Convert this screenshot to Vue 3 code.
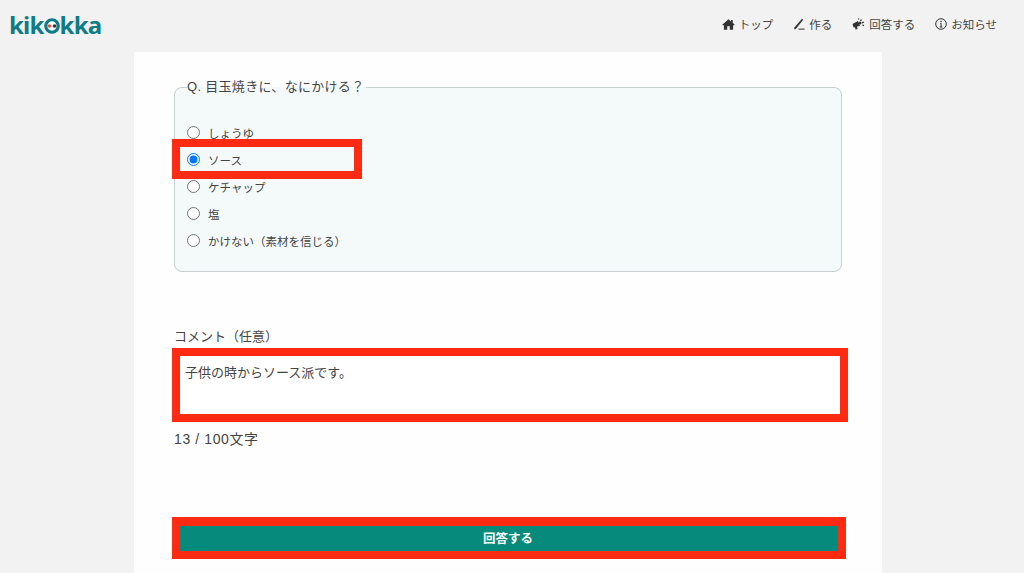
<script setup>
const options = [
  { label: 'しょうゆ' },
  { label: 'ソース', checked: true },
  { label: 'ケチャップ' },
  { label: '塩' },
  { label: 'かけない（素材を信じる）' },
]
const nav = ['home', 'pen', 'horn', 'info']
const navText = { home: 'トップ', pen: '作る', horn: '回答する', info: 'お知らせ' }
</script>

<template>
  <div class="page">
    <header class="header">
      <div class="logo" aria-label="kikokka">
        <span>kik</span>
        <svg class="owl" viewBox="0 0 20 20" width="16" height="16">
          <circle cx="10" cy="10" r="7.8" fill="#fff" stroke="#0e7c88" stroke-width="4" />
          <circle cx="6.8" cy="10" r="2.2" fill="#ef4a3c" />
          <circle cx="13.2" cy="10" r="2.2" fill="#333" />
        </svg>
        <span>kka</span>
      </div>
      <nav class="nav">
        <a v-for="n in nav" :key="n" class="nav-item">
          <svg v-if="n === 'home'" viewBox="0 0 14 12" width="13" height="11">
            <path d="M7 0.2 L0.2 6.2 L1.2 7.2 L2 6.5 V11.8 H5.6 V8 H8.4 V11.8 H12 V6.5 L12.8 7.2 L13.8 6.2 L11.6 4.2 V1 H9.8 V2.6 Z" fill="#333" />
          </svg>
          <svg v-else-if="n === 'pen'" viewBox="0 0 12 12" width="12" height="12">
            <path d="M9 0.8 L10.2 1.8 L3 10.8 L1.2 11.5 L1.4 9.6 Z" fill="#333" />
            <rect x="5.6" y="10.6" width="6" height="1" fill="#333" />
          </svg>
          <svg v-else-if="n === 'horn'" viewBox="0 0 13 12" width="13" height="12">
            <path d="M0.5 6 L6 3 L8 8 L5 8.6 L5.6 11 L3.6 11.5 L2.9 9.2 L1.6 9.4 Z" fill="#333" />
            <path d="M6.2 1.4 L7 0.6 M9.2 1.4 L8.8 3 M11.8 4.2 L10 4.8 M12 7.6 L10.4 7" stroke="#333" stroke-width="1.3" fill="none" />
            <circle cx="8" cy="5" r="1.5" fill="#333" />
          </svg>
          <svg v-else viewBox="0 0 12 12" width="12" height="12">
            <circle cx="6" cy="6" r="5.3" fill="none" stroke="#333" stroke-width="1" />
            <circle cx="6" cy="3.5" r="0.8" fill="#333" />
            <path d="M5 5.2 H6.6 V8.6 H7.4 V9.4 H4.8 V8.6 H5.6 V6 H5 Z" fill="#333" />
          </svg>
          <span>{{ navText[n] }}</span>
        </a>
      </nav>
    </header>

    <main class="card">
      <fieldset class="question">
        <legend class="legend">Q. 目玉焼きに、なにかける？</legend>
        <label
          v-for="o in options"
          :key="o.label"
          class="option"
          :class="{ marked: o.checked }"
        >
          <input class="radio" type="radio" name="q" :checked="o.checked" />
          <span>{{ o.label }}</span>
        </label>
      </fieldset>

      <label class="comment-label" for="comment">コメント（任意）</label>
      <div class="marked-box comment-box">
        <textarea id="comment" class="comment" readonly>子供の時からソース派です。</textarea>
      </div>
      <p class="count">13 / 100文字</p>

      <div class="marked-box submit-box">
        <button class="submit" type="button">回答する</button>
      </div>
    </main>
  </div>
</template>

<style>
html, body { margin: 0; height: 100%; overflow: hidden; background: #f2f2f2; }
</style>

<style scoped>
.page {
  height: 573px;
  display: flex;
  flex-direction: column;
  background: #f2f2f2;
  color: #444;
  font-family: "Liberation Sans", "Noto Sans CJK JP", sans-serif;
  overflow: hidden;
}
.header {
  flex: none;
  height: 52px;
  display: flex;
  align-items: flex-start;
  justify-content: space-between;
  padding: 0 27px 0 9px;
}
.logo {
  margin-top: 8px;
  display: flex;
  align-items: center;
  height: 32px;
  color: #0e7c88;
  font-family: "Noto Sans", sans-serif;
  font-weight: 700;
  font-size: 24px;
  letter-spacing: -0.8px;
}
.owl { margin: 4px 0 0 0; }
.nav {
  display: flex;
  gap: 20px;
  margin-top: 15px;
}
.nav-item {
  display: flex;
  align-items: center;
  gap: 4px;
  height: 18px;
  font-size: 11.5px;
  color: #444;
}
.card {
  flex: 1;
  width: 748px;
  box-sizing: border-box;
  margin-left: 134px;
  background: #fefefe;
  padding: 26px 40px 0;
}
.question {
  margin: 0;
  padding: 23px 12px 17px;
  height: 194px;
  box-sizing: border-box;
  border: 1px solid #c6d0d0;
  border-radius: 8px;
  background: #f4fafa;
}
.legend {
  padding: 0 2px 0 0;
  margin-left: 0;
  font-size: 13px;
  line-height: 18px;
  letter-spacing: 0.3px;
  color: #444;
}
.option {
  position: relative;
  display: flex;
  align-items: center;
  gap: 8px;
  height: 27px;
  font-size: 11.5px;
}
.radio { margin: 0; width: 13px; height: 13px; }
.marked::after,
.marked-box::after {
  content: "";
  position: absolute;
  border: 8px solid #ff2a12;
  pointer-events: none;
}
.marked::after { left: -15px; top: -7px; width: 174px; height: 24px; }
.comment-label {
  display: block;
  margin-top: 55px;
  font-size: 13px;
  line-height: 20px;
}
.marked-box { position: relative; }
.comment-box { margin-top: 9px; }
.marked-box::after { left: -2px; right: -6px; top: -8px; bottom: -8px; }
.comment {
  display: block;
  width: 100%;
  height: 58px;
  box-sizing: border-box;
  border: 0;
  padding: 8px 11px;
  margin: 0;
  resize: none;
  background: #fff;
  color: #444;
  font: 13px/18px "Liberation Sans", "Noto Sans CJK JP", sans-serif;
  outline: none;
}
.count {
  margin: 15px 0 0;
  font-size: 14px;
  line-height: 20px;
  letter-spacing: 0.6px;
}
.submit-box { margin-top: 77px; }
.submit-box::after { right: -4px; top: -9px; border-top-width: 9px; }
.submit {
  display: block;
  width: 658px;
  margin-left: 6px;
  height: 25px;
  border: 0;
  padding: 0 2px 2px 0;
  background: #058a7c;
  color: #fff;
  font: 700 12.5px "Liberation Sans", "Noto Sans CJK JP", sans-serif;
}
</style>
